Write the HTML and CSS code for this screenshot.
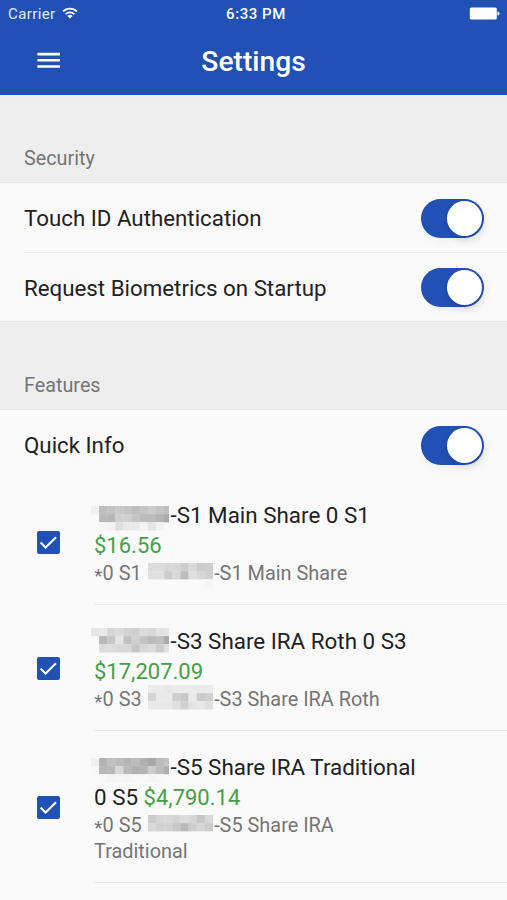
FILE: index.html
```html
<!DOCTYPE html>
<html lang="en">
<head>
<meta charset="utf-8">
<title>Settings</title>
<link rel="stylesheet" href="styles.css">
</head>
<body>
<header class="appbar">
  <div class="status">
    <div class="carrier"><span>Carrier</span>
      <svg class="wifi" width="16" height="12" viewBox="0 0 16 12" fill="none" stroke="#fff" stroke-width="1.8"><path d="M1 4.4a10 10 0 0 1 14 0M3.7 7.2a6.2 6.2 0 0 1 8.6 0"/><path d="M8 11.6 5.4 9a3.7 3.7 0 0 1 5.2 0z" fill="#fff" stroke="none"/></svg>
    </div>
    <span class="clock">6:33 PM</span>
    <svg class="battery" width="31" height="13" viewBox="0 0 31 13" fill="#fff"><rect x="0.8" y="0.5" width="27" height="12" rx="1.5"/><path d="M28.5 4.5a2 2 0 0 1 0 4z"/></svg>
  </div>
  <div class="toolbar">
    <svg class="menu" width="23" height="17" viewBox="0 0 23 17" fill="#fff"><path d="M.4.8h22.6v2.6H.4zM.4 7h22.6v2.6H.4zM.4 13.2h22.6v2.6H.4z"/></svg>
    <h1>Settings</h1>
  </div>
</header>
<main>
  <h2>Security</h2>
  <section>
    <div class="row"><span>Touch ID Authentication</span><i class="toggle"></i></div>
    <div class="row"><span>Request Biometrics on Startup</span><i class="toggle"></i></div>
  </section>
  <h2 class="features">Features</h2>
  <section>
    <div class="row"><span>Quick Info</span><i class="toggle"></i></div>
    <div class="account">
      <svg class="check" viewBox="0 0 22 22"><rect width="22" height="22" rx="2"/><path d="M3.5 11 8.2 15.8 18.2 6"/></svg>
      <div class="info">
        <p class="name"><svg class="mask" data-cells="f0 bd c3 c8 c4 bc c6 cc c4 be/-- b9 b5 d0 d0 c5 bc bc b4 aa/-- f6 f2 de e9 e9 f4 e4 f2 --"></svg>-S1 Main Share 0 S1</p>
        <p class="name"><b>$16.56</b></p>
        <p class="sub"><span class="star">*</span>0 S1 <svg class="mask small" data-cells="dc dc d6 d6 cc da cc ce/e0 e0 cc d8 be e0 d8 d0/-- -- -- -- -- -- -- f4"></svg>-S1 Main Share</p>
      </div>
    </div>
    <div class="account">
      <svg class="check" viewBox="0 0 22 22"><rect width="22" height="22" rx="2"/><path d="M3.5 11 8.2 15.8 18.2 6"/></svg>
      <div class="info">
        <p class="name"><svg class="mask" data-shift="-4" data-cells="e6 e8 d6 da d2 d0 dc d8 e2 e4/-- b8 c6 e6 c0 d0 c4 bc c0 aa/-- dc dc d8 d8 c6 d8 dc cc e0"></svg>-S3 Share IRA Roth 0 S3</p>
        <p class="name"><b>$17,207.09</b></p>
        <p class="sub"><span class="star">*</span>0 S3 <svg class="mask small" data-shift="-4" data-cells="eb eb e8 eb eb eb ea eb/d4 ea ea ce c8 ea cc d0/e8 e8 e8 e0 d0 e4 e8 e0"></svg>-S3 Share IRA Roth</p>
      </div>
    </div>
    <div class="account">
      <svg class="check" viewBox="0 0 22 22"><rect width="22" height="22" rx="2"/><path d="M3.5 11 8.2 15.8 18.2 6"/></svg>
      <div class="info">
        <p class="name"><svg class="mask" data-cells="f0 b2 c0 bc b4 bc b0 a8 bc c4/f8 b6 b8 d8 b8 b0 b4 cc bc ae/-- f8 f4 f6 f4 f8 f8 f4 f8 --"></svg>-S5 Share IRA Traditional</p>
        <p class="name">0 S5 <b>$4,790.14</b></p>
        <p class="sub"><span class="star">*</span>0 S5 <svg class="mask small" data-cells="cc d6 d8 d4 dc d6 c6 d8/d8 d0 d2 c8 b8 cc d6 cc"></svg>-S5 Share IRA<br>Traditional</p>
      </div>
    </div>
  </section>
</main>
<script src="mask.js"></script>
</body>
</html>
```

FILE: styles.css
```css
* { box-sizing: border-box; margin: 0; padding: 0; }
body { width: 507px; height: 900px; overflow: hidden; background: #fafafa; color: #212121; font-family: Roboto, sans-serif; }
.appbar { height: 95px; background: #2151b5; color: #fff; }
.status { display: grid; grid-template-columns: 1fr auto 1fr; align-items: center; height: 27px; padding: 0 7px 0 8px; font-size: 15px; }
.carrier { display: flex; align-items: center; gap: 6px; letter-spacing: 0.4px; color: #e3eaf7; }
.wifi { margin-top: -2px; }
.clock { margin-left: 4px; font-weight: 500; letter-spacing: 0.55px; }
.battery { justify-self: end; }
.toolbar { display: grid; grid-template-columns: 1fr auto 1fr; align-items: center; height: 68px; padding: 0 37px; }
.menu { margin-top: -2px; }
h1 { padding-top: 1px; font-size: 28.2px; font-weight: 500; }
h2 { height: 88px; padding: 50px 24px 0; background: #eee; border-bottom: 1px solid #e4e4e4; color: #757575; font-size: 19.8px; font-weight: 400; line-height: 27px; }
.row { display: flex; align-items: center; justify-content: space-between; height: 69px; margin-left: 24px; padding: 1px 23px 0 0; font-size: 22.3px; }
.row + .row { border-top: 1px solid #eaeaea; height: 69px; }
.features { border-top: 1px solid #e4e4e4; height: 89px; }
.toggle { width: 63px; height: 39px; padding: 2px; border-radius: 20px; background: #2151b5; box-shadow: 3px 5px 8px #0000000a; }
.toggle::after { content: ""; display: block; width: 35px; height: 35px; margin-left: 24px; border-radius: 50%; background: #fff; box-shadow: 0 3px 7px #0002; }
.account { display: flex; align-items: center; padding-left: 37px; }
.check { flex: none; width: 23px; height: 23px; margin-right: 34px; fill: #2151b5; }
.check path { fill: none; stroke: #fff; stroke-width: 2; }
.info { flex: 1; padding: 21px 0 17px; border-bottom: 1px solid #eaeaea; }
.name { height: 30px; font-size: 22.4px; line-height: 30px; white-space: nowrap; }
.name b { color: #43a047; font-size: 22px; font-weight: 400; }
.sub { margin-top: 1px; color: #757575; font-size: 19.9px; line-height: 26px; white-space: nowrap; }
.star { display: inline-block; transform: translateY(2px) scale(.95); }
.mask { display: inline-block; width: 78px; height: 16px; margin: 0 1.5px 0 -3px; overflow: visible; vertical-align: 1px; }
.small { width: 65px; margin: 0 1.5px 0 1px; }
```

FILE: mask.js
```js
// Draws the mosaic that hides account numbers: one grey square per hex value.
const CELL = 8.1;
document.querySelectorAll('.mask').forEach(svg => {
  const shift = Number(svg.dataset.shift || 0);
  const width = svg.classList.contains('small') ? 65 : 78;
  svg.dataset.cells.split('/').forEach((row, y) => {
    row.split(' ').forEach((shade, x) => {
      if (shade === '--') return;
      const rect = document.createElementNS('http://www.w3.org/2000/svg', 'rect');
      rect.setAttribute('x', x * CELL);
      rect.setAttribute('y', y * CELL + shift);
      rect.setAttribute('width', Math.min(CELL + 0.3, width - x * CELL));
      rect.setAttribute('height', CELL + 0.2);
      rect.setAttribute('fill', '#' + shade + shade + shade);
      svg.appendChild(rect);
    });
  });
});
```
